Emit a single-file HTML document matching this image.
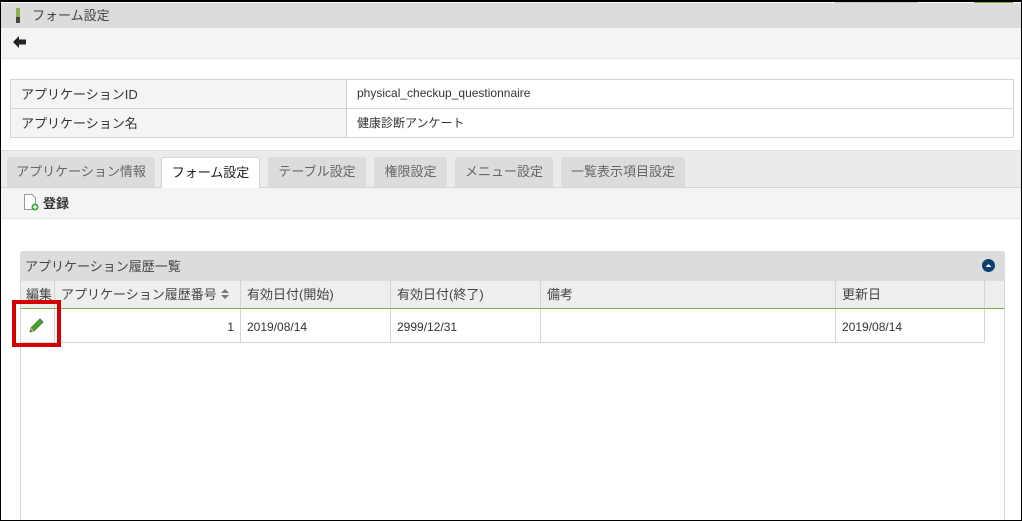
<!DOCTYPE html>
<html><head><meta charset="utf-8"><style>
*{box-sizing:border-box;margin:0;padding:0}
body{width:1022px;height:521px;overflow:hidden;background:#fff;font-family:"Liberation Sans","Noto Sans CJK JP",sans-serif;font-size:13px;color:#333;position:relative}
.a{position:absolute}
.frame{position:absolute;left:0;top:0;width:1022px;height:521px;border:1px solid #000;border-top-width:2px;pointer-events:none;z-index:10}
td{border:1px solid #d4d4d4;padding:0 10px 2px;height:29px;vertical-align:middle}
.tab{position:absolute;top:157px;height:30px;background:#dcdcdc;border-radius:3px 3px 0 0;line-height:30px;text-align:center;color:#666;font-size:13px}
.th{position:absolute;top:281px;height:27px;line-height:27px;border-right:1px solid #d4d4d4;padding-left:6px;color:#444}
.tdc{position:absolute;top:309px;height:34px;line-height:36px;border-right:1px solid #d4d4d4;border-bottom:1px solid #d4d4d4;padding-left:6px;font-size:12px}
</style></head><body>
<div class="a" style="left:835px;top:0;width:83px;height:3px;background:#ccc"></div>
<div class="a" style="left:974px;top:0;width:39px;height:3px;background:#7fae48"></div>
<div class="a" style="left:0;top:3px;width:1022px;height:25px;background:#dcdcdc"></div>
<div class="a" style="left:16px;top:8px;width:4px;height:9px;background:#8ab04e"></div>
<div class="a" style="left:16px;top:17px;width:4px;height:6px;background:#444"></div>
<div class="a" style="left:32px;top:5px;font-size:13px;color:#444">フォーム設定</div>
<div class="a" style="left:0;top:28px;width:1022px;height:31px;background:#f4f4f4;border-bottom:1px solid #e6e6e6"></div>
<svg class="a" style="left:13px;top:36px" width="14" height="12" viewBox="0 0 14 12"><path d="M0 6 L6 0 V3.5 H13 V8.5 H6 V12 Z" fill="#222"/></svg>
<table class="a" style="left:10px;top:79px;width:1004px;border-collapse:collapse">
<tr><td style="width:336px;background:#f4f4f4">アプリケーションID</td><td style="font-size:12px">physical_checkup_questionnaire</td></tr>
<tr><td style="background:#f4f4f4">アプリケーション名</td><td style="font-size:12px">健康診断アンケート</td></tr>
</table>
<div class="a" style="left:0;top:150px;width:1022px;height:38px;background:#ebebeb;border-top:1px solid #ddd;border-bottom:1px solid #d4d4d4"></div>
<div class="tab" style="left:7px;width:148px">アプリケーション情報</div>
<div class="tab" style="left:161px;width:99px;background:#fff;color:#222;height:31px;border:1px solid #d4d4d4;border-bottom:none">フォーム設定</div>
<div class="tab" style="left:268px;width:98px">テーブル設定</div>
<div class="tab" style="left:374px;width:73px">権限設定</div>
<div class="tab" style="left:455px;width:98px">メニュー設定</div>
<div class="tab" style="left:561px;width:124px">一覧表示項目設定</div>
<div class="a" style="left:0;top:188px;width:1022px;height:31px;background:#f4f4f4;border-bottom:1px solid #e6e6e6"></div>
<svg class="a" style="left:23px;top:193px" width="16" height="18" viewBox="0 0 16 18"><path d="M1.5 1.5 H9 L12.5 5 V16.5 H1.5 Z" fill="#fff" stroke="#999"/><circle cx="12" cy="14" r="3.5" fill="#3a3"/><path d="M12 12 V16 M10 14 H14" stroke="#fff" stroke-width="1.4"/></svg>
<div class="a" style="left:43px;top:193px;font-weight:bold;color:#333">登録</div>
<div class="a" style="left:20px;top:251px;width:985px;height:270px;border:1px solid #d4d4d4;border-radius:3px 3px 0 0"></div>
<div class="a" style="left:20px;top:251px;width:985px;height:30px;background:#dcdcdc;border-radius:3px 3px 0 0"></div>
<div class="a" style="left:25px;top:256px;color:#444">アプリケーション履歴一覧</div>
<svg class="a" style="left:982px;top:259px" width="13" height="13" viewBox="0 0 13 13"><circle cx="6.5" cy="6.5" r="6.5" fill="#0e3f6e"/><path d="M3.5 8 L6.5 5 L9.5 8 Z" fill="#fff"/></svg>
<div class="a" style="left:21px;top:281px;width:983px;height:27px;background:#eee"></div>
<div class="a" style="left:21px;top:308px;width:983px;height:1px;background:#7fae48"></div>
<div class="th" style="left:21px;width:34px;padding-left:5px">編集</div>
<div class="th" style="left:55px;width:186px">アプリケーション履歴番号<svg width="10" height="12" viewBox="0 0 10 12" style="margin-left:3px;vertical-align:-1px"><path d="M1 5 L5 1 L9 5Z M1 7 L5 11 L9 7Z" fill="#777"/></svg></div>
<div class="th" style="left:241px;width:150px">有効日付(開始)</div>
<div class="th" style="left:391px;width:150px">有効日付(終了)</div>
<div class="th" style="left:541px;width:295px">備考</div>
<div class="th" style="left:836px;width:149px">更新日</div>
<div class="tdc" style="left:21px;width:34px"></div>
<div class="tdc" style="left:55px;width:186px;text-align:right;padding-right:6px">1</div>
<div class="tdc" style="left:241px;width:150px">2019/08/14</div>
<div class="tdc" style="left:391px;width:150px">2999/12/31</div>
<div class="tdc" style="left:541px;width:295px"></div>
<div class="tdc" style="left:836px;width:149px">2019/08/14</div>
<svg class="a" style="left:28px;top:316px" width="18" height="18" viewBox="0 0 18 18"><path d="M2 16 L3 12 L12 3 L15 6 L6 15 Z" fill="#4aa332" stroke="#2d7a1e" stroke-width="0.8"/><path d="M2 16 L3 12 L6 15 Z" fill="#d9b98a"/><path d="M2 16 L2.6 14 L4 15.4Z" fill="#333"/></svg>
<div class="a" style="left:12px;top:300px;width:49px;height:47px;border:4px solid #d40000"></div>
<div class="frame"></div>
</body></html>
